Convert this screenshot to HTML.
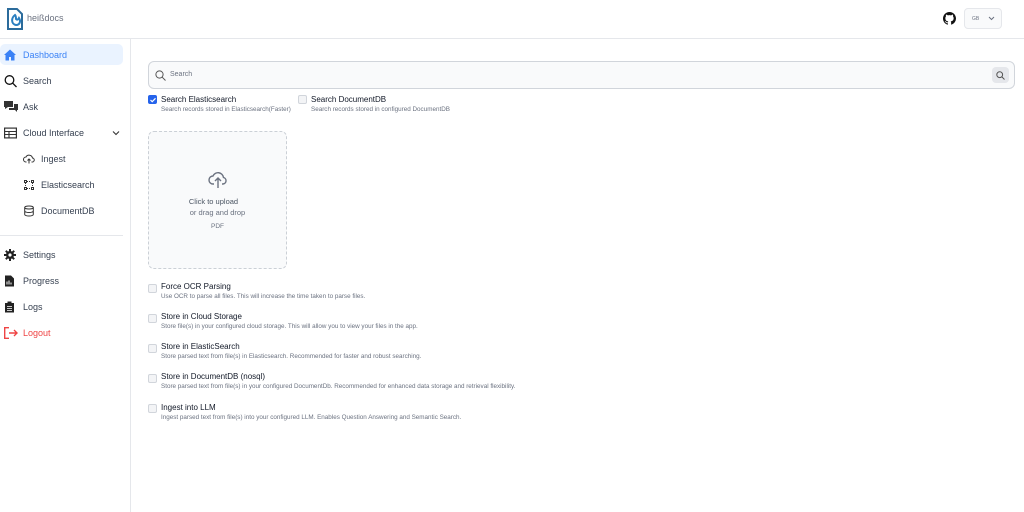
<!DOCTYPE html>
<html><head><meta charset="utf-8"><style>
*{box-sizing:border-box;margin:0;padding:0}
body{width:1024px;height:512px;font-family:"Liberation Sans",sans-serif;background:#fff;position:relative;overflow:hidden;color:#111827}
.hdr{position:absolute;left:0;top:0;width:1024px;height:39px;border-bottom:1px solid #e5e7eb}
.side{position:absolute;left:0;top:39px;width:131px;height:473px;border-right:1px solid #e5e7eb}
.it{position:absolute;left:0;width:130px;height:22px;font-size:9px;color:#374151;white-space:nowrap}
.it svg{position:absolute;top:50%;transform:translateY(-50%)}
.it span{position:absolute;top:6px;white-space:nowrap}
.txt{position:absolute;font-size:8px;color:#111827;white-space:nowrap}
.sub{position:absolute;font-size:6.3px;color:#6b7280;white-space:nowrap}
.cb{position:absolute;width:9px;height:9px;border:1px solid #d1d5db;border-radius:2px;background:#f3f4f6}
</style></head><body>
<div class="hdr">
<svg style="position:absolute;left:5px;top:7px" width="22" height="24" viewBox="0 0 22 24"><path d="M3 2h9l5 5v15H3z" fill="none" stroke="#2b6b9b" stroke-width="2"/><path d="M10 8c-4 3-4 9 1 10 4 0 5-4 3-7-1 2-2 2-3 1 0-2 0-3-1-4z" fill="none" stroke="#2b7fc0" stroke-width="2"/></svg>
<span style="position:absolute;left:27px;top:13px;font-size:9px;color:#6b7280">heißdocs</span>
<svg style="position:absolute;left:943px;top:12px" width="13" height="13" viewBox="0 0 16 16"><path fill="#111" d="M8 0C3.6 0 0 3.6 0 8c0 3.5 2.3 6.5 5.5 7.6.4.1.5-.2.5-.4v-1.4c-2.2.5-2.7-1-2.7-1-.4-.9-.9-1.2-.9-1.200-.7-.5.1-.5.1-.5.8.1 1.2.8 1.2.8.7 1.3 1.9.9 2.3.7.1-.5.3-.9.5-1.1-1.8-.2-3.6-.9-3.6-4 0-.9.3-1.6.8-2.1-.1-.2-.4-1 .1-2.1 0 0 .7-.2 2.2.8a7.4 7.4 0 014 0c1.5-1 2.2-.8 2.2-.8.4 1.1.2 1.9.1 2.1.5.6.8 1.3.8 2.1 0 3.1-1.9 3.7-3.6 3.9.3.3.5.8.5 1.5v2.2c0 .2.1.5.6.4A8 8 0 0016 8c0-4.4-3.6-8-8-8z"/></svg>
<div style="position:absolute;left:964px;top:8px;width:38px;height:21px;border:1px solid #e5e7eb;border-radius:4px;background:#f9fafb"><span style="position:absolute;left:7px;top:7px;font-size:5px;color:#6b7280">GB</span><svg style="position:absolute;left:23px;top:7px" width="7" height="5" viewBox="0 0 7 5"><path d="M1 1l2.5 2.5L6 1" fill="none" stroke="#6b7280"/></svg></div>
</div>
<div class="side">
<div style="position:absolute;left:0;top:5px;width:123px;height:21px;background:#eaf3ff;border-radius:5px"></div>
<div class="it" style="top:5px;color:#3b82f6"><svg style="left:4px" width="12" height="11" viewBox="0 0 12 11"><path d="M6 0L0 5.5h1.5V11h3.5V7.5h2V11h3.5V5.5H12z" fill="#3b82f6"/></svg><span style="left:23px">Dashboard</span></div>
<div class="it" style="top:31px"><svg style="left:4px" width="13" height="13" viewBox="0 0 13 13"><circle cx="5.5" cy="5.5" r="4.3" fill="none" stroke="#111" stroke-width="1.3"/><path d="M8.6 8.6L12.5 12.5" stroke="#111" stroke-width="1.3"/></svg><span style="left:23px">Search</span></div>
<div class="it" style="top:57px"><svg style="left:4px" width="14" height="12" viewBox="0 0 14 12"><path d="M0 0h9v6H4L1 8V6H0z" fill="#333"/><path d="M10 3h4v6h-1v2l-2-2H5V7h5z" fill="#333"/></svg><span style="left:23px">Ask</span></div>
<div class="it" style="top:83px"><svg style="left:4px" width="13" height="11" viewBox="0 0 13 11"><rect x=".6" y=".6" width="11.8" height="9.8" fill="none" stroke="#333" stroke-width="1.2"/><path d="M.6 4h11.8M.6 7h11.8M5 4v6.4" stroke="#333" stroke-width="1.1"/></svg><span style="left:23px">Cloud Interface</span><svg style="left:112px" width="8" height="5" viewBox="0 0 8 5"><path d="M1 1l3 3 3-3" fill="none" stroke="#333" stroke-width="1.1"/></svg></div>
<div class="it" style="top:109px"><svg style="left:23px" width="12" height="10" viewBox="0 0 12 10"><path d="M3.5 8H3a2.5 2.5 0 010-5 3.5 3.5 0 016.5 1A2 2 0 019 8h-.5M6 9.5V5M4.5 6.5L6 5l1.5 1.5" fill="none" stroke="#333" stroke-width="1"/></svg><span style="left:41px">Ingest</span></div>
<div class="it" style="top:135px"><svg style="left:24px" width="10" height="10" viewBox="0 0 10 10"><rect x=".5" y=".5" width="2" height="2" fill="none" stroke="#333"/><rect x="7.5" y=".5" width="2" height="2" fill="none" stroke="#333"/><rect x=".5" y="7.5" width="2" height="2" fill="none" stroke="#333"/><rect x="7.5" y="7.5" width="2" height="2" fill="none" stroke="#333"/><path d="M3 1.5h4M3 8.5h4M1.5 3v4M8.5 3v4" stroke="#333" stroke-dasharray="1 1"/></svg><span style="left:41px">Elasticsearch</span></div>
<div class="it" style="top:161px"><svg style="left:24px" width="10" height="11" viewBox="0 0 10 11"><ellipse cx="5" cy="2" rx="4.3" ry="1.5" fill="none" stroke="#333"/><path d="M.7 2v7c0 .8 1.9 1.5 4.3 1.5S9.3 9.8 9.3 9V2M.7 5.5c0 .8 1.9 1.5 4.3 1.5s4.3-.7 4.3-1.5" fill="none" stroke="#333"/></svg><span style="left:41px">DocumentDB</span></div>
<div style="position:absolute;left:0;top:196px;width:123px;height:1px;background:#e5e7eb"></div>
<div class="it" style="top:205px"><svg style="left:4px" width="12" height="12" viewBox="0 0 12 12"><circle cx="6" cy="6" r="4" fill="#222"/><path d="M6 0v12M0 6h12M1.8 1.8l8.4 8.4M10.2 1.8l-8.4 8.4" stroke="#222" stroke-width="2"/><circle cx="6" cy="6" r="1.6" fill="#fff"/></svg><span style="left:23px">Settings</span></div>
<div class="it" style="top:231px"><svg style="left:5px" width="9" height="11" viewBox="0 0 9 11"><path d="M0 0h6l3 3v8H0z" fill="#222"/><path d="M2 9V6M4 9V5M6 9V7" stroke="#fff"/></svg><span style="left:23px">Progress</span></div>
<div class="it" style="top:257px"><svg style="left:5px" width="9" height="11" viewBox="0 0 9 11"><rect x="0" y="1.5" width="9" height="9.5" fill="#222"/><rect x="2.5" y="0" width="4" height="2.5" fill="#222"/><path d="M2 5h5M2 7h5M2 9h5" stroke="#fff" stroke-width=".8"/></svg><span style="left:23px">Logs</span></div>
<div class="it" style="top:283px;color:#ef4444"><svg style="left:4px" width="14" height="12" viewBox="0 0 14 12"><path d="M5 .7H.7v10.6H5M5 6h8M10 3l3 3-3 3" fill="none" stroke="#ef4444" stroke-width="1.4"/></svg><span style="left:23px">Logout</span></div>
</div>
<div style="position:absolute;left:148px;top:61px;width:867px;height:28px;border:1px solid #d1d5db;border-radius:6px;background:#f9fafb">
<svg style="position:absolute;left:6px;top:8px" width="11" height="11" viewBox="0 0 11 11"><circle cx="4.5" cy="4.5" r="3.6" fill="none" stroke="#555"/><path d="M7.2 7.2L10.5 10.5" stroke="#555"/></svg>
<span style="position:absolute;left:21px;top:9px;font-size:7px;color:#6b7280">Search</span>
<div style="position:absolute;left:843px;top:5px;width:17px;height:16px;border-radius:4px;background:#e5e7eb"><svg style="position:absolute;left:4px;top:4px" width="9" height="9" viewBox="0 0 9 9"><circle cx="3.7" cy="3.7" r="2.9" fill="none" stroke="#555"/><path d="M5.9 5.9L8.5 8.5" stroke="#555"/></svg></div>
</div>
<div class="cb" style="left:148px;top:95px;background:#2563eb;border-color:#2563eb"><svg style="position:absolute;left:0;top:0" width="8" height="8" viewBox="0 0 8 8"><path d="M1.5 4l1.7 1.7L6.5 2.3" fill="none" stroke="#fff" stroke-width="1.2"/></svg></div>
<div class="txt" style="left:161px;top:95px">Search Elasticsearch</div>
<div class="sub" style="left:161px;top:106px">Search records stored in Elasticsearch(Faster)</div>
<div class="cb" style="left:298px;top:95px"></div>
<div class="txt" style="left:311px;top:95px">Search DocumentDB</div>
<div class="sub" style="left:311px;top:106px">Search records stored in configured DocumentDB</div>
<div style="position:absolute;left:148px;top:131px;width:139px;height:138px;border:1px dashed #cbd0d6;border-radius:6px;background:#f9fafb">
<svg style="position:absolute;left:59px;top:37px" width="20" height="20" viewBox="0 0 20 20"><path d="M6 15H5a4 4 0 010-8 5.5 5.5 0 0110.5 1.5A3.3 3.3 0 0115 15h-1M10 19V9M7 12l3-3 3 3" fill="none" stroke="#6b7280" stroke-width="1.4"/></svg>
<div style="position:absolute;left:-4px;width:137px;top:65px;text-align:center;font-size:7.5px;color:#4b5563">Click to upload</div>
<div style="position:absolute;left:0;width:137px;top:76px;text-align:center;font-size:7.5px;color:#6b7280">or drag and drop</div>
<div style="position:absolute;left:0;width:137px;top:91px;text-align:center;font-size:6.5px;color:#6b7280">PDF</div>
</div>
<div class="cb" style="left:148px;top:284px"></div><div class="txt" style="left:161px;top:282px">Force OCR Parsing</div><div class="sub" style="left:161px;top:293px">Use OCR to parse all files. This will increase the time taken to parse files.</div>
<div class="cb" style="left:148px;top:314px"></div><div class="txt" style="left:161px;top:312px">Store in Cloud Storage</div><div class="sub" style="left:161px;top:323px">Store file(s) in your configured cloud storage. This will allow you to view your files in the app.</div>
<div class="cb" style="left:148px;top:344px"></div><div class="txt" style="left:161px;top:342px">Store in ElasticSearch</div><div class="sub" style="left:161px;top:353px">Store parsed text from file(s) in Elasticsearch. Recommended for faster and robust searching.</div>
<div class="cb" style="left:148px;top:374px"></div><div class="txt" style="left:161px;top:372px">Store in DocumentDB (nosql)</div><div class="sub" style="left:161px;top:383px">Store parsed text from file(s) in your configured DocumentDb. Recommended for enhanced data storage and retrieval flexibility.</div>
<div class="cb" style="left:148px;top:404px"></div><div class="txt" style="left:161px;top:403px">Ingest into LLM</div><div class="sub" style="left:161px;top:414px">Ingest parsed text from file(s) into your configured LLM. Enables Question Answering and Semantic Search.</div>
</body></html>
